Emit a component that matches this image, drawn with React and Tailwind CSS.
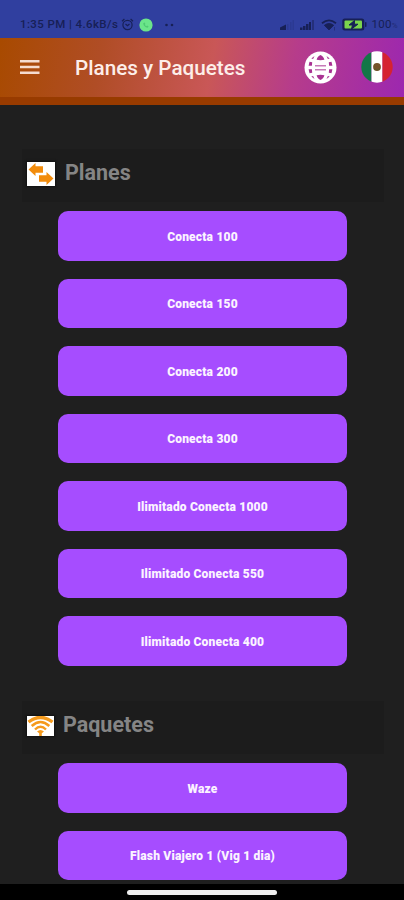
const planes = [
  'Conecta 100',
  'Conecta 150',
  'Conecta 200',
  'Conecta 300',
  'Ilimitado Conecta 1000',
  'Ilimitado Conecta 550',
  'Ilimitado Conecta 400',
];
const paquetes = ['Waze', 'Flash Viajero 1 (Vig 1 dia)'];

function StatusBar() {
  return (
    <div className="flex h-[38px] shrink-0 items-center bg-[#303f9f] pl-[20px] pr-[6px] pt-[11px] text-[11.5px] leading-none text-[#172056]">
      <span className="w-[99px] whitespace-nowrap font-medium tracking-[0.4px]">1:35 PM | 4.6kB/s</span>
      <svg className="ml-[2px] h-[13px] w-[13px]" viewBox="0 0 13 13" fill="none" stroke="currentColor" strokeWidth="1.2">
        <circle cx="6.5" cy="7" r="4.6" />
        <path d="M1 3.2 3.4 1M12 3.2 9.600 1M4.500 6l2 1.800 2-1.800" />
      </svg>
      <svg className="ml-[5px] h-[14px] w-[14px]" viewBox="0 0 14 14">
        <circle cx="7" cy="7" r="6.600" fill="#6be58a" />
        <path d="M4.200 5.200c.2 2.400 2 4 4.400 4.500l1-1.300-1.500-.9-.8.7c-.7-.4-1.200-.9-1.500-1.500l.6-.8-.7-1.500z" fill="#4fca74" />
      </svg>
      <svg className="ml-[12px] h-[4px] w-[9px]" viewBox="0 0 9 4" fill="currentColor">
        <circle cx="1.500" cy="2" r="1.300" />
        <circle cx="7" cy="2" r="1.300" />
      </svg>
      <svg className="ml-auto h-[10px] w-[15px]" viewBox="0 0 15 10" fill="currentColor">
        <path d="M0 10V7.500L6 4.500V10z" />
        <path d="M7 4h1.500v6H7zM10 2h1.500v8H10zM12.500 0H14v10h-1.500z" opacity=".18" />
      </svg>
      <svg className="ml-[5px] h-[10px] w-[15px]" viewBox="0 0 15 10" fill="currentColor">
        <path d="M0 7.500h2.500V10H0zM3 6h2.500v4H3zM6 4h2.500v6H6zM9 2h2v8H9z" />
        <path d="M12 0h2v10h-2z" opacity=".5" />
      </svg>
      <svg className="ml-[6px] h-[12px] w-[16px]" viewBox="0 0 16 12" fill="none" stroke="currentColor">
        <path d="M1 4.200Q8-1.400 15 4.200" strokeWidth="1.800" />
        <path d="M3.300 6.300Q8 2.500 12.700 6.300L8 11z" fill="currentColor" strokeWidth=".8" />
        <path d="M13.500 8v3.500" strokeWidth="1" opacity=".5" />
      </svg>
      <svg className="ml-[5px] h-[13px] w-[25px]" viewBox="0 0 25 13">
        <rect x=".3" y=".5" width="22" height="12" rx="2.500" fill="#172056" />
        <rect x="23" y="4" width="1.500" height="5" rx=".7" fill="#172056" />
        <rect x="2.500" y="2.500" width="17.500" height="8" rx="1" fill="#7bd54d" />
        <path d="M12.500 2.500 7 7h3.500l-1 4L16 6.200h-3.600z" fill="#172056" stroke="#172056" />
      </svg>
      <span className="ml-[5px] whitespace-nowrap tracking-[0.3px]">
        100<span className="text-[8px] opacity-60">%</span>
      </span>
    </div>
  );
}

function GlobeIcon() {
  return (
    <svg className="h-[33px] w-[33px]" viewBox="0 0 33 33">
      <circle cx="16.500" cy="16.500" r="16" fill="#fff" />
      <g fill="#a93292">
        <path d="M16.500 4c-1.900.7-3.200 2.300-3.900 4.700q3.900.9 7.800 0c-.7-2.400-2-4-3.900-4.700zM16.500 29c-1.900-.7-3.200-2.300-3.900-4.700q3.900-.9 7.800 0c-.7 2.400-2 4-3.900 4.700z" />
        <path d="M10.500 5 7.300 7.500l1.800.6zM22.500 5l3.200 2.500-1.800.6zM10.500 28l-3.200-2.500 1.800-.6zM22.500 28l3.200-2.500-1.800-.6z" />
        <path d="M5.500 10.700 8.200 11.300 7.900 14.700H4.600zM27.500 10.700l-2.700.6.3 3.400h3.300zM4.600 18.300h3.300l.3 3.400-2.700.6zM28.400 18.300h-3.300l-.3 3.400 2.700.6z" />
        <path d="M11 14h11v1.500H11zM11 18h11v1.500H11z" opacity=".65" />
      </g>
    </svg>
  );
}

function MexicoFlag() {
  return (
    <svg className="h-[32px] w-[32px]" viewBox="0 0 32 32">
      <defs>
        <clipPath id="flag-circle"><circle cx="16" cy="16" r="15.700" /></clipPath>
      </defs>
      <g clipPath="url(#flag-circle)">
        <path fill="#137747" d="M0 0h10.500v32H0z" />
        <path fill="#fff" d="M10.500 0h11v32h-11z" />
        <path fill="#d52331" d="M21.500 0H32v32H21.500z" />
      </g>
      <circle cx="16" cy="16" r="3.900" fill="#76522a" />
      <path d="M13 17.500q3 3 6 0" fill="none" stroke="#5c5a2b" strokeWidth="1" />
    </svg>
  );
}

function ArrowsIcon() {
  return (
    <svg className="h-[24px] w-[28px] bg-white" viewBox="0 0 28 24" fill="#f28c0c">
      <path d="M1.500 7.500 8.500 1v3.300H16v6.400H8.500V14zM26.500 16.500 19.500 10v3.300H12v6.400h7.500V23z" />
    </svg>
  );
}

function WifiIcon() {
  return (
    <svg className="h-[20px] w-[27px] bg-white" viewBox="0 0 27 20" fill="none" stroke="#f59a1c">
      <path d="M1.500 6Q13.500-3.200 25.500 6" strokeWidth="3.400" />
      <path d="M4.700 10Q13.500 2 22.300 10" strokeWidth="2.500" />
      <path d="M8 13.500Q13.500 8 19 13.500" strokeWidth="2.400" />
      <path d="M10 15.500q3.500-3 7 0L14.800 17.300V20h-2.600v-2.700z" fill="#f59a1c" stroke="none" />
    </svg>
  );
}

function SectionTitle({ icon, children, gap }) {
  return (
    <div className="ml-[22px] mr-[20px] flex h-[53px] items-center bg-[#1c1c1c] pl-[5px]">
      <div className="mt-[-3px] shadow-[0_0_2px_1px_#111111]">{icon}</div>
      <h2 className={`${gap} mt-[-6px] text-[21.5px] font-bold leading-none text-[#858585]`}>{children}</h2>
    </div>
  );
}

function PlanList({ items }) {
  return (
    <div className="ml-[58px] mr-[57px] mt-[9px] flex flex-col gap-[18px]">
      {items.map((label) => (
        <button
          key={label}
          className="flex h-[49.5px] shrink-0 items-center justify-center rounded-[10px] bg-[#a64dff] pt-[2px] text-[12px] font-black leading-none tracking-[0.2px] text-[#fbf3ff]"
        >
          {label}
        </button>
      ))}
    </div>
  );
}

export default function App() {
  return (
    <div className="flex h-[900px] w-[404px] flex-col overflow-hidden bg-[#1f1f1f] font-[Roboto,'Liberation_Sans',sans-serif]">
      <StatusBar />
      <header className="flex h-[66.5px] shrink-0 items-center border-b-8 border-[#983b00] bg-[linear-gradient(100deg,#a84a00_0%,#b04d26_25%,#c95757_52%,#b63c8b_72%,#9c27b0_100%)] bg-origin-border pl-[20px] pr-[11px]">
        <svg className="mt-[-1px] h-[16px] w-[20px]" viewBox="0 0 20 16" fill="#f5dcd0">
          <path d="M0 1h19.500v2.600H0zM0 6.700h19.500v2.600H0zM0 12.400h19.500V15H0z" />
        </svg>
        <h1 className="ml-[35px] mt-[3px] whitespace-nowrap text-[20.7px] font-medium leading-none text-[#fdeee9]">Planes y Paquetes</h1>
        <div className="ml-auto flex items-center gap-[24px]">
          <GlobeIcon />
          <MexicoFlag />
        </div>
      </header>
      <main className="min-h-0 flex-1 overflow-hidden pt-[44.5px]">
        <SectionTitle icon={<ArrowsIcon />} gap="ml-[10px]">Planes</SectionTitle>
        <PlanList items={planes} />
        <div className="h-[35.5px]" />
        <SectionTitle icon={<WifiIcon />} gap="ml-[9px]">Paquetes</SectionTitle>
        <PlanList items={paquetes} />
      </main>
      <div className="flex h-[16px] shrink-0 items-center justify-center bg-black">
        <div className="h-[5px] w-[150px] rounded-full bg-[#eeeeee]" />
      </div>
    </div>
  );
}
